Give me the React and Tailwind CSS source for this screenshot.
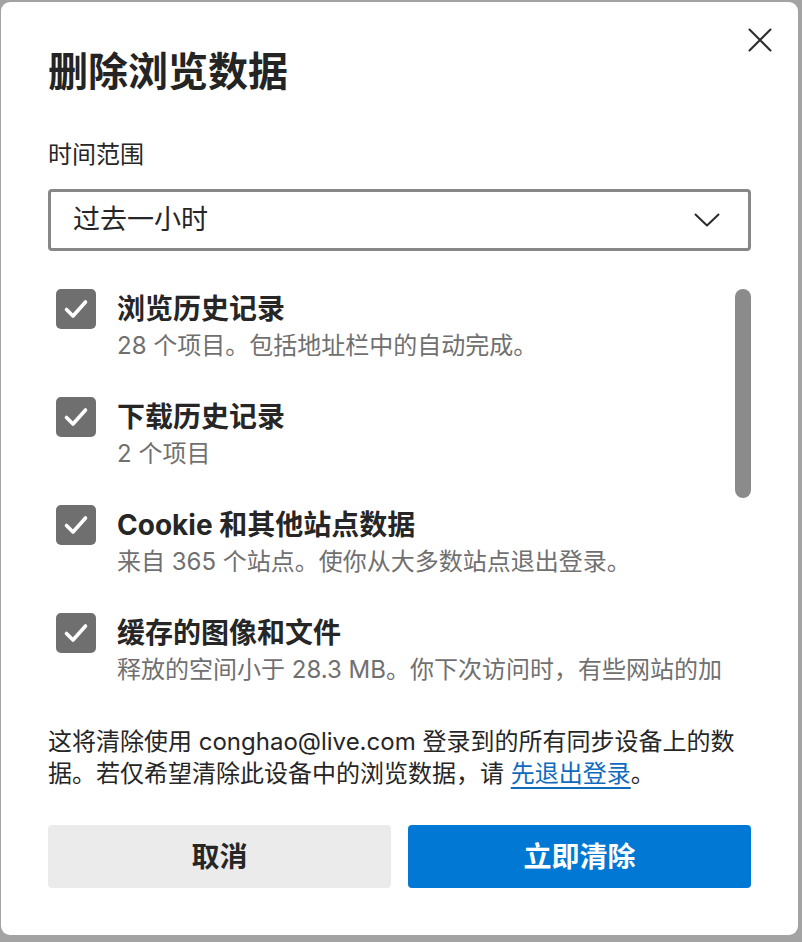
import React from "react";

const FONT = { fontFamily: 'Inter, "Noto Sans CJK SC", sans-serif' };

function Check() {
  return (
    <div className="w-[40px] h-[40px] rounded-[5px] bg-[#6f6f6f] flex items-center justify-center shrink-0">
      <svg width="40" height="40" viewBox="0 0 40 40">
        <path d="M10.5 20.5 L17 27 L29.5 13" fill="none" stroke="#fff" strokeWidth="3.6" strokeLinecap="round" strokeLinejoin="round" />
      </svg>
    </div>
  );
}

function Item({ title, sub }) {
  return (
    <div className="flex gap-[21px] pl-[8px]">
      <Check />
      <div className="flex flex-col min-w-0">
        <div className="text-[28px] leading-[40px] font-bold text-[#262626]">{title}</div>
        <div className="text-[24px] leading-[34px] text-[#707070]">{sub}</div>
      </div>
    </div>
  );
}

export default function App() {
  return (
    <div style={FONT} className="w-[802px] h-[942px] bg-[#a3a3a3] pt-[2px] pl-[1px] pr-[4px] pb-[7px]">
      <div className="relative w-full h-full bg-white rounded-[9px] pl-[47px] pr-[47px] pt-[46px] flex flex-col">
        <button className="absolute top-[26px] right-[26px] w-[24px] h-[24px] flex items-center justify-center">
          <svg width="24" height="24" viewBox="0 0 24 24">
            <path d="M1.5 1.5 L22.5 22.5 M22.5 1.5 L1.5 22.5" stroke="#2b2b2b" strokeWidth="2" strokeLinecap="round" />
          </svg>
        </button>
        <h1 className="text-[40px] leading-[48px] font-bold text-[#242424]">删除浏览数据</h1>
        <div className="mt-[43px] text-[24px] leading-[32px] text-[#262626]">时间范围</div>
        <div className="mt-[18px] h-[62px] border-[3px] border-[#878787] rounded-[4px] flex items-center justify-between pl-[22px] pr-[28px]">
          <span className="text-[27px] text-[#262626]">过去一小时</span>
          <svg width="26" height="14" viewBox="0 0 26 14">
            <path d="M1.5 1.5 L13 12.5 L24.5 1.5" fill="none" stroke="#2b2b2b" strokeWidth="2" strokeLinecap="round" strokeLinejoin="round" />
          </svg>
        </div>
        <div className="mt-[38px] h-[400px] overflow-hidden flex gap-[8px]">
          <div className="flex-1 flex flex-col gap-[34px] min-w-0">
            <Item title="浏览历史记录" sub="28 个项目。包括地址栏中的自动完成。" />
            <Item title="下载历史记录" sub="2 个项目" />
            <Item title="Cookie 和其他站点数据" sub="来自 365 个站点。使你从大多数站点退出登录。" />
            <Item title="缓存的图像和文件" sub="释放的空间小于 28.3 MB。你下次访问时，有些网站的加" />
          </div>
          <div className="w-[16px] shrink-0">
            <div className="w-[16px] h-[209px] rounded-full bg-[#8b8b8b]" />
          </div>
        </div>
        <p className="mt-[37px] text-[24px] leading-[32px] text-[#262626]">
          这将清除使用 conghao@live.com 登录到的所有同步设备上的数<br />据。若仅希望清除此设备中的浏览数据，请{" "}
          <a className="text-[#0f6cbd] underline underline-offset-[5px] decoration-[2px]">先退出登录</a>。
        </p>
        <div className="mt-[35px] grid grid-cols-2 gap-[17px]">
          <button className="h-[63px] rounded-[4px] bg-[#ebebeb] text-[28px] font-bold text-[#262626]">取消</button>
          <button className="h-[63px] rounded-[4px] bg-[#0078d4] text-[28px] font-bold text-white">立即清除</button>
        </div>
      </div>
    </div>
  );
}
